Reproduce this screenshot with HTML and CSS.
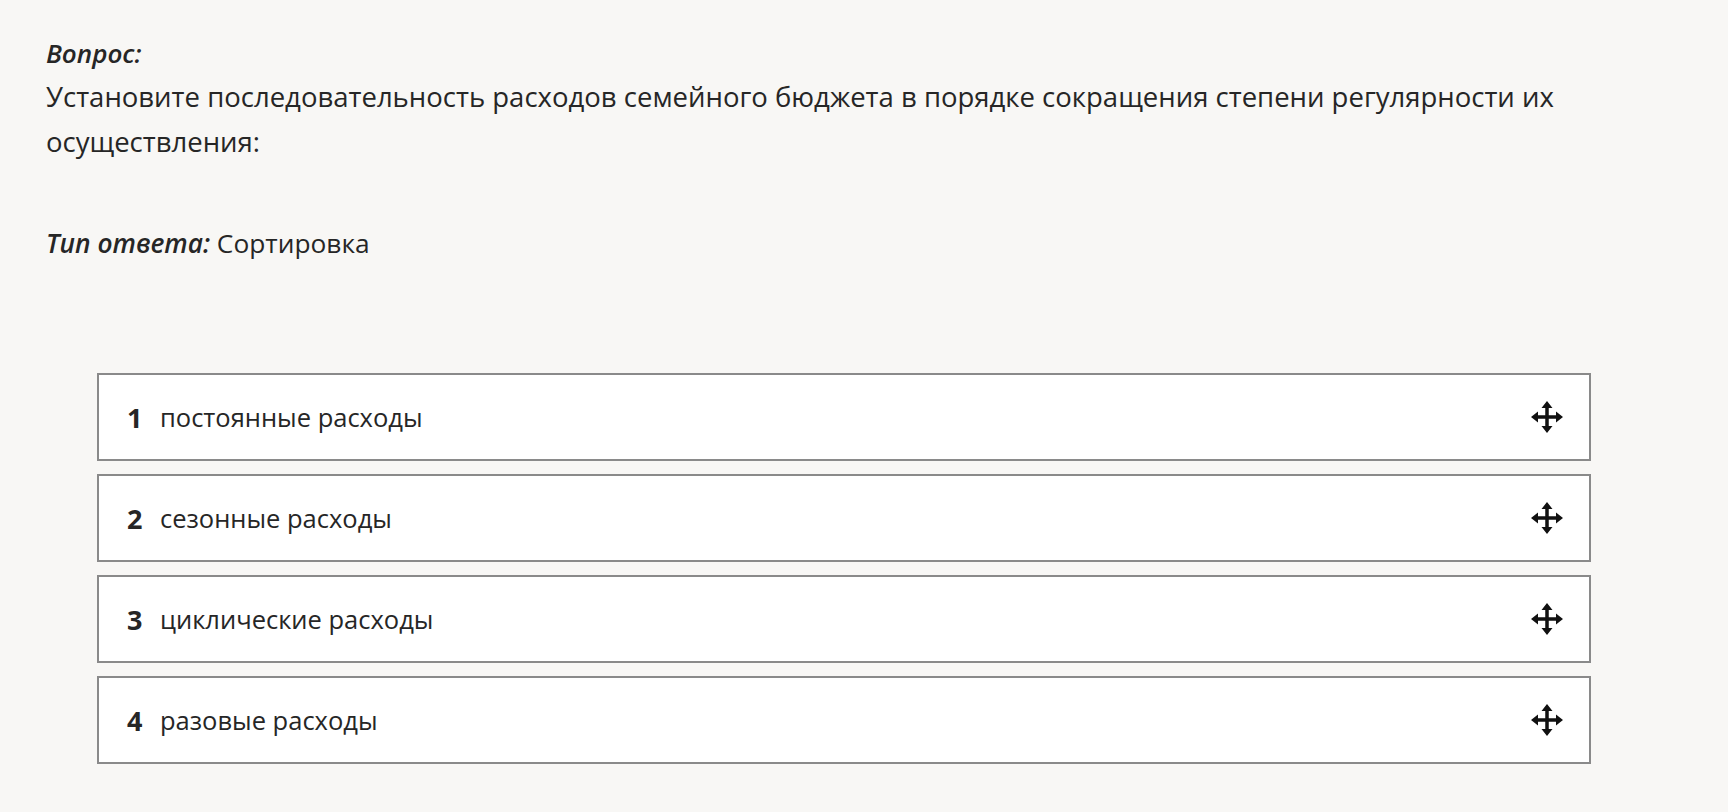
FILE: index.html
```html
<!DOCTYPE html>
<html lang="ru">
  <head>
    <meta charset="UTF-8" />
    <meta name="viewport" content="width=device-width, initial-scale=1.0" />
    <title>Вопрос</title>
    <link rel="stylesheet" href="styles.css">
  </head>
  <body>
    <div class="question">
      <div class="q_label">Вопрос:</div>
      <div class="q_text">Установите последовательность расходов семейного бюджета в порядке сокращения степени регулярности их осуществления:</div>
      <div class="q_type"><span class="q_label">Тип ответа:</span> Сортировка</div>

      <ul class="sort_list">
        <li class="sort_item">
          <span class="num">1</span>
          <span class="txt">постоянные расходы</span>
          <svg class="move" viewBox="0 0 34 34"><path d="M6 17H28M17 6V28" /><path class="head" d="M1 17L8 11.5V22.5ZM33 17L26 11.5V22.5ZM17 1L11.5 8H22.5ZM17 33L11.5 26H22.5Z" /></svg>
        </li>
        <li class="sort_item">
          <span class="num">2</span>
          <span class="txt">сезонные расходы</span>
          <svg class="move" viewBox="0 0 34 34"><path d="M6 17H28M17 6V28" /><path class="head" d="M1 17L8 11.5V22.5ZM33 17L26 11.5V22.5ZM17 1L11.5 8H22.5ZM17 33L11.5 26H22.5Z" /></svg>
        </li>
        <li class="sort_item">
          <span class="num">3</span>
          <span class="txt">циклические расходы</span>
          <svg class="move" viewBox="0 0 34 34"><path d="M6 17H28M17 6V28" /><path class="head" d="M1 17L8 11.5V22.5ZM33 17L26 11.5V22.5ZM17 1L11.5 8H22.5ZM17 33L11.5 26H22.5Z" /></svg>
        </li>
        <li class="sort_item">
          <span class="num">4</span>
          <span class="txt">разовые расходы</span>
          <svg class="move" viewBox="0 0 34 34"><path d="M6 17H28M17 6V28" /><path class="head" d="M1 17L8 11.5V22.5ZM33 17L26 11.5V22.5ZM17 1L11.5 8H22.5ZM17 33L11.5 26H22.5Z" /></svg>
        </li>
      </ul>
    </div>
  </body>
</html>
```

FILE: styles.css
```css
* {
  padding: 0;
  margin: 0;
  box-sizing: border-box;
}
body {
  background: #f8f7f5;
  color: #262626;
  font-family: "Open Sans", "Noto Sans", sans-serif;
  font-size: 27.5px;
}
.question {
  padding: 35px 46px 40px 46px;
}
.q_label {
  font-style: italic;
  font-weight: 600;
  font-size: 26px;
}
.q_text {
  line-height: 45px;
  margin-top: 3px;
  max-width: 1560px;
}
.q_type {
  margin-top: 61px;
  font-size: 26.3px;
}
.q_type .q_label {
  font-size: 26.3px;
}
.sort_list {
  list-style: none;
  margin: 112px 91px 0 51px;
  font-size: 25.5px;
}
.sort_item {
  display: flex;
  align-items: center;
  height: 88px;
  padding: 0 25px 0 28px;
  margin-bottom: 13px;
  background: #fff;
  border: 2px solid #8a8a8a;
}
.sort_item .num {
  font-weight: 700;
  font-size: 27px;
  width: 33px;
}
.sort_item .txt {
  flex: 1;
}
.move {
  width: 34px;
  height: 34px;
}
.move path {
  stroke: #111;
  stroke-width: 3.5;
  fill: none;
}
.move path.head {
  stroke: none;
  fill: #111;
}
```
